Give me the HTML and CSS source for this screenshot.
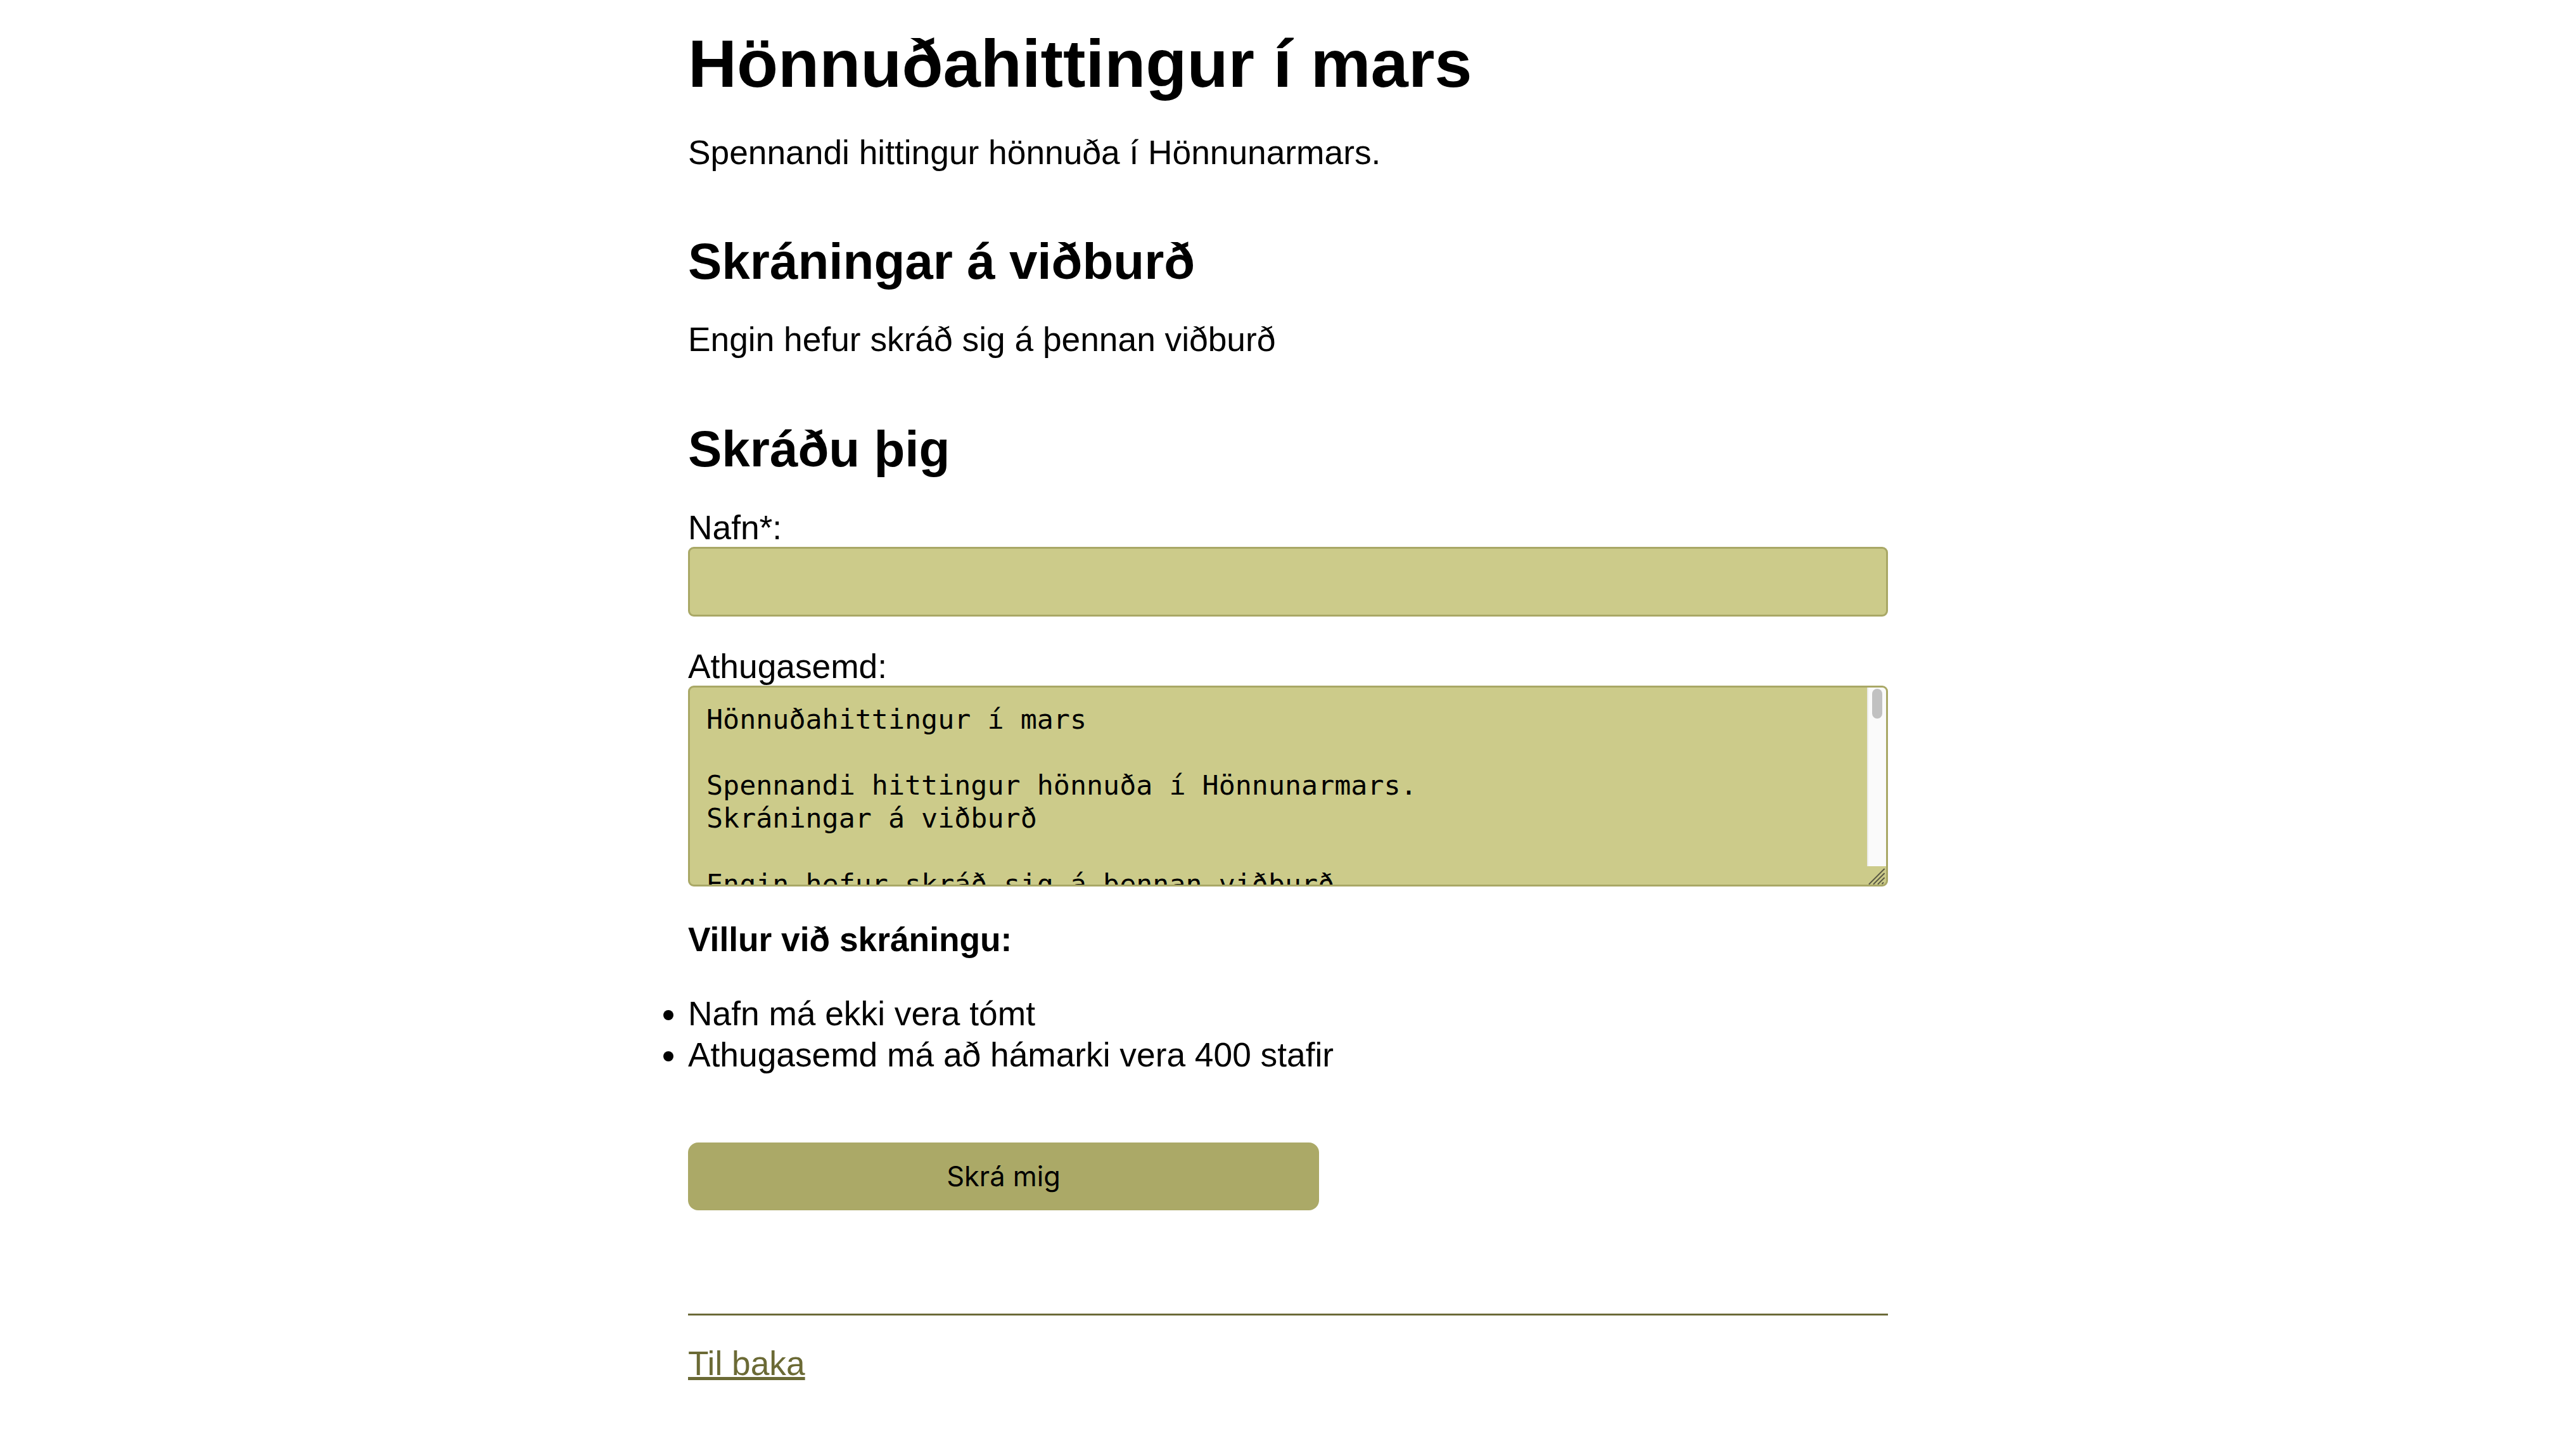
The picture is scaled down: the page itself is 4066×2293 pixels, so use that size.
FILE: index.html
```html
<!DOCTYPE html>
<html lang="is">
<head>
<meta charset="utf-8">
<title>Hönnuðahittingur í mars</title>
<link rel="stylesheet" href="styles.css">
</head>
<body>
<main class="page">
  <h1 class="title">Hönnuðahittingur í mars</h1>
  <p class="lead">Spennandi hittingur hönnuða í Hönnunarmars.</p>

  <h2 class="section-title">Skráningar á viðburð</h2>
  <p class="text">Engin hefur skráð sig á þennan viðburð</p>

  <h2 class="section-title">Skráðu þig</h2>
  <form class="form">
    <div class="field">
      <label class="field-label" for="name">Nafn*:</label>
      <input class="field-input" id="name" type="text">
    </div>
    <div class="field">
      <label class="field-label" for="comment">Athugasemd:</label>
      <div class="textarea-wrap">
        <textarea class="field-textarea" id="comment">
Hönnuðahittingur í mars

Spennandi hittingur hönnuða í Hönnunarmars.
Skráningar á viðburð

Engin hefur skráð sig á þennan viðburð

Skráðu þig
Nafn*:
Athugasemd:
Villur við skráningu:
Nafn má ekki vera tómt
Athugasemd má að hámarki vera 400 stafir
Skrá mig
Til baka
Hönnuðahittingur í mars

Spennandi hittingur hönnuða í Hönnunarmars.
Skráningar á viðburð

Engin hefur skráð sig á þennan viðburð

Skráðu þig
Nafn*:
Athugasemd:
Villur við skráningu:
Nafn má ekki vera tómt
Athugasemd má að hámarki vera 400 stafir
Skrá mig
Til baka
Hönnuðahittingur í mars

Spennandi hittingur hönnuða í Hönnunarmars.</textarea>
        <div class="scrollbar" aria-hidden="true">
          <span class="scrollbar-thumb"></span>
        </div>
        <svg class="resizer" aria-hidden="true" width="30" height="30" viewBox="0 0 30 30">
          <line x1="3.5" y1="29" x2="27" y2="5.5"></line>
          <line x1="10.5" y1="29" x2="27" y2="12.5"></line>
          <line x1="17.5" y1="29" x2="27" y2="19.5"></line>
          <line x1="24" y1="28.5" x2="25.5" y2="27"></line>
        </svg>
      </div>
    </div>
    <p class="errors-title"><strong>Villur við skráningu:</strong></p>
    <ul class="errors">
      <li>Nafn má ekki vera tómt</li>
      <li>Athugasemd má að hámarki vera 400 stafir</li>
    </ul>
    <button class="submit" type="button">Skrá mig</button>
  </form>
  <hr class="divider">
  <p class="back"><a class="back-link" href="#">Til baka</a></p>
</main>
</body>
</html>
```

FILE: styles.css
```css
html, body {
  margin: 0;
  padding: 0;
  background: #ffffff;
}

body {
  font-family: "Liberation Sans", Arial, Helvetica, sans-serif;
  font-size: 53.3px;
  line-height: 59.8px;
  color: #000000;
}

.page {
  max-width: 1894px;
  margin: 0 auto;
  padding-top: 41px;
  padding-bottom: 60px;
}

.title {
  font-size: 106.6px;
  font-weight: bold;
  line-height: 119.6px;
  margin: 0;
}

.lead {
  margin: 50px 0 0;
}

.section-title {
  font-size: 80px;
  font-weight: bold;
  line-height: 89.7px;
  margin: 98px 0 0;
}

.text {
  margin: 48px 0 0;
}

.form {
  margin: 0;
}

.field {
  margin-top: 49px;
}

.field-label {
  display: block;
}

.field-input {
  display: block;
  box-sizing: border-box;
  width: 100%;
  height: 110px;
  margin: 1px 0 0;
  border: 3px solid #a9a866;
  border-radius: 9px;
  background: #cccb8a;
  font-size: 43px;
  padding: 0 26px;
}

.textarea-wrap {
  position: relative;
}

.field-textarea {
  display: block;
  box-sizing: border-box;
  width: 100%;
  height: 317px;
  margin: 0;
  border: 3px solid #a9a866;
  border-radius: 9px;
  background: #cccb8a;
  color: #000000;
  font-family: "DejaVu Sans Mono", "Liberation Mono", monospace;
  font-size: 43.33px;
  line-height: 52px;
  padding: 24px 26px;
  resize: none;
  overflow: hidden;
}

.scrollbar {
  position: absolute;
  top: 3px;
  right: 3px;
  width: 28px;
  height: 282px;
  background: #fafafa;
  border-left: 2px solid #ebebeb;
  border-top-right-radius: 6px;
}

.scrollbar-thumb {
  position: absolute;
  top: 2px;
  left: 6px;
  width: 16px;
  height: 47px;
  border-radius: 8px;
  background: #c1c1c1;
}

.resizer {
  position: absolute;
  right: 3px;
  bottom: 3px;
  stroke: #5b5a45;
  stroke-width: 2;
  stroke-linecap: round;
}

.errors-title {
  margin: 54px 0 0;
}

.errors {
  margin: 54px 0 0;
  padding: 0;
  list-style: disc outside;
}

.errors li {
  line-height: 65px;
}

.submit {
  display: block;
  width: 996px;
  height: 107px;
  margin: 106px 0 0;
  border: 0;
  border-radius: 16px;
  background: #aba967;
  color: #000000;
  font-family: Inter, "Liberation Sans", sans-serif;
  font-size: 43.33px;
  padding: 0;
}

.divider {
  margin: 163px 0 0;
  height: 3px;
  border: 0;
  background: #6b6a38;
}

.back {
  margin: 46px 0 0;
}

.back-link {
  color: #6b6a35;
  text-decoration: underline;
}
```
